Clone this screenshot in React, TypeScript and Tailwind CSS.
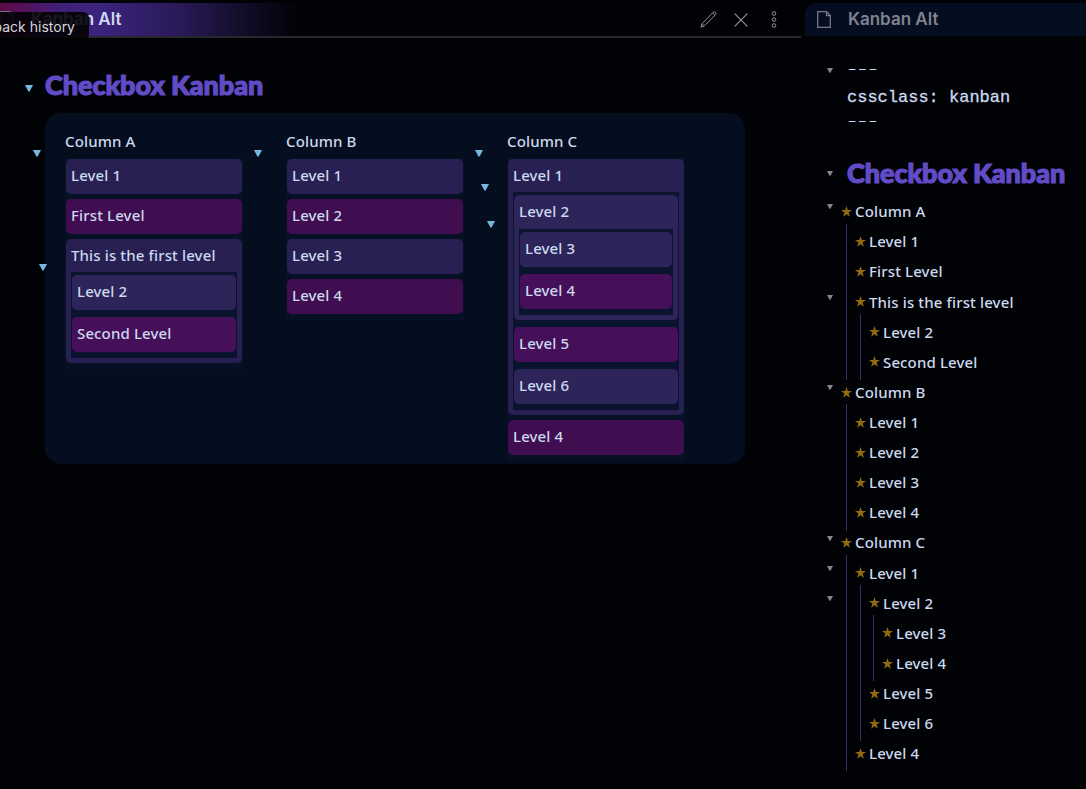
import React from "react";

type Item = { t: string; pink?: boolean; kids?: Item[] };

const columns: { title: string; items: Item[] }[] = [
  {
    title: "Column A",
    items: [
      { t: "Level 1" },
      { t: "First Level", pink: true },
      { t: "This is the first level", kids: [{ t: "Level 2" }, { t: "Second Level", pink: true }] },
    ],
  },
  {
    title: "Column B",
    items: [{ t: "Level 1" }, { t: "Level 2", pink: true }, { t: "Level 3" }, { t: "Level 4", pink: true }],
  },
  {
    title: "Column C",
    items: [
      {
        t: "Level 1",
        kids: [
          { t: "Level 2", kids: [{ t: "Level 3" }, { t: "Level 4", pink: true }] },
          { t: "Level 5", pink: true },
          { t: "Level 6" },
        ],
      },
      { t: "Level 4", pink: true },
    ],
  },
];

const outline: { t: string; d: number; fold?: boolean }[] = [
  { t: "Column A", d: 0, fold: true },
  { t: "Level 1", d: 1 },
  { t: "First Level", d: 1 },
  { t: "This is the first level", d: 1, fold: true },
  { t: "Level 2", d: 2 },
  { t: "Second Level", d: 2 },
  { t: "Column B", d: 0, fold: true },
  { t: "Level 1", d: 1 },
  { t: "Level 2", d: 1 },
  { t: "Level 3", d: 1 },
  { t: "Level 4", d: 1 },
  { t: "Column C", d: 0, fold: true },
  { t: "Level 1", d: 1, fold: true },
  { t: "Level 2", d: 2, fold: true },
  { t: "Level 3", d: 3 },
  { t: "Level 4", d: 3 },
  { t: "Level 5", d: 2 },
  { t: "Level 6", d: 2 },
  { t: "Level 4", d: 1 },
];

function Tri({ className }: { className: string }) {
  return (
    <svg viewBox="0 0 8 7" preserveAspectRatio="none" className={className}>
      <path d="M0 0H8L4.6 6.6H3.4Z" fill="currentColor" />
    </svg>
  );
}

function FileIcon({ className }: { className: string }) {
  return (
    <svg viewBox="0 0 14 17" fill="none" stroke="currentColor" strokeWidth="1.3" className={className}>
      <path d="M.7.7H9.5L13.3 4.6V16.3H.7Z" />
      <path d="M9.5 .7V4.6H13.3" />
    </svg>
  );
}

function Card({ item, depth }: { item: Item; depth: number }) {
  const color = item.pink
    ? depth ? "bg-[#460f5a]" : "bg-[#400d50]"
    : depth ? "bg-[#2d245a]" : "bg-[#282052]";
  if (!item.kids) {
    return <div className={`h-[35px] rounded-[5px] pl-[5px] leading-[32px] ${color}`}>{item.t}</div>;
  }
  return (
    <div className={`rounded-[5px] px-[5px] pb-[5px] ${color}`}>
      <div className={depth ? "h-[34px] leading-[32px]" : "h-[33px] leading-[32px]"}>{item.t}</div>
      <div className="flex flex-col gap-[7px] bg-[#0b142f] px-px pt-[3px] pb-[6px]">
        {item.kids.map((k) => (
          <Card key={k.t} item={k} depth={depth + 1} />
        ))}
      </div>
    </div>
  );
}

function Heading() {
  return (
    <h1 className="font-['Lato'] text-[27px] leading-[32px] font-black tracking-[-0.05px] whitespace-nowrap text-[#624bc6] [-webkit-text-stroke:1.2px_#624bc6]">
      Checkbox Kanban
    </h1>
  );
}

const blueMarks = [
  "left-[25px] top-[85px]",
  "left-[33px] top-[150px]",
  "left-[39px] top-[264px]",
  "left-[254px] top-[150px]",
  "left-[475px] top-[150px]",
  "left-[481px] top-[184px]",
  "left-[487px] top-[221px]",
];

const guides = ["left-[36px]", "left-[50px]", "left-[63px]"];
const indents = ["pl-[31px]", "pl-[45px]", "pl-[59px]", "pl-[72px]"];

export default function App() {
  return (
    <div className="relative flex h-[789px] w-[1086px] gap-[4px] overflow-hidden bg-[#010206] pt-[3px] font-['Noto_Sans',sans-serif] text-[15px] font-medium tracking-[0.13px] text-[#ccd9ee]">
      <main className="w-[801px] shrink-0">
        <header className="flex h-[35px] items-center border-b-2 border-[#29272e] bg-[linear-gradient(90deg,#5e0b45_0px,#560f58_20px,#3f2078_60px,#3b237d_100px,#291a57_180px,#130d2a_240px,#010206_298px)]">
          <FileIcon className="h-[17px] w-[14px] text-[#75708a]" />
          <span className="ml-[17px] flex-1 font-['Inter'] text-[17px] font-semibold tracking-normal text-[#d0d9f0]">Kanban Alt</span>
          <div className="flex items-center pr-[24px] text-[#93939c]">
            <svg viewBox="0 0 17 17" fill="none" stroke="currentColor" className="mr-[17px] size-[17px]">
              <path d="M.8 16.2 2 12.8 13.3 1.2 Q14.4 .3 15.5 1.3 Q16.6 2.5 15.7 3.6L4.1 15Z M12.6 2 15 4.4 M2 12.8 4.1 15" />
            </svg>
            <svg viewBox="0 0 14 14" stroke="currentColor" className="mr-[23px] size-[14px]">
              <path d="M.7.7 13.3 13.3M13.3.7.7 13.3" strokeWidth="1.2" />
            </svg>
            <svg viewBox="0 0 6 17" fill="none" stroke="currentColor" className="h-[17px] w-[6px]">
              <circle cx="3" cy="2.5" r="1.8" />
              <circle cx="3" cy="8.5" r="1.8" />
              <circle cx="3" cy="14.5" r="1.8" />
            </svg>
          </div>
        </header>
        <section className="pt-[31px] pl-[45px]">
          <Heading />
          <div className="mt-[12px] flex h-[351px] w-[700px] items-start gap-[43px] rounded-[16px] bg-[#050e1f] pt-[14px] pl-[20px]">
            {columns.map((c) => (
              <div key={c.title} className="w-[178px]">
                <div className="h-[31px] leading-[29px]">{c.title}</div>
                <div className="flex flex-col gap-[5px] bg-[#061126] px-px pt-px pb-[6px]">
                  {c.items.map((i) => (
                    <Card key={i.t} item={i} depth={0} />
                  ))}
                </div>
              </div>
            ))}
          </div>
        </section>
      </main>

      <aside className="flex-1">
        <header className="flex h-[33px] items-center rounded-tl-[12px] bg-[#050e20] pl-[12px] text-[#777887]">
          <FileIcon className="h-[17px] w-[14px]" />
          <span className="ml-[17px] font-['Inter'] text-[17px] font-semibold tracking-normal text-[#81828f]">Kanban Alt</span>
        </header>
        <div className="pt-[21px] pl-[22px]">
          <div className="flex items-center gap-[14px]">
            <Tri className="h-[5px] w-[6px] text-[#85858d]" />
            <span className="h-[26px] font-['Inter'] text-[23px] leading-[24px] font-extralight tracking-[0.1px]">---</span>
          </div>
          <div className="h-[28px] pl-[20px] font-['Liberation_Mono',monospace] text-[17px] leading-[30px] tracking-normal [-webkit-text-stroke:0.3px_#ccd9ee]">
            cssclass: kanban
          </div>
          <div className="h-[26px] pl-[20px] font-['Inter'] text-[23px] leading-[20px] font-extralight tracking-[0.1px]">---</div>
          <div className="mt-[20px] flex items-center gap-[14px]">
            <Tri className="h-[5px] w-[6px] text-[#85858d]" />
            <Heading />
          </div>
        </div>
        <ul className="mt-[7.4px]">
          {outline.map((o, i) => {
            const next = outline[i + 1]?.d ?? 0;
            return (
              <li key={i} className={`relative flex h-[30.11px] items-center ${indents[o.d]}`}>
                {o.fold && <Tri className="absolute top-[8px] left-[22px] h-[5px] w-[6px] text-[#85858d]" />}
                {guides.slice(0, o.d).map((g, n) => (
                  <span
                    key={g}
                    className={`absolute top-0 w-px translate-x-[5px] translate-y-[-3px] bg-[#3d2e69] ${g} ${n >= next ? "bottom-[-6px]" : "bottom-0"}`}
                  />
                ))}
                <svg viewBox="0 0 10 10" className="mr-[3px] ml-[5px] size-[11px] shrink-0 text-[#926b10]">
                  <path d="M5 0 6.2 3.7H10L6.9 6 8.1 9.8 5 7.5 1.9 9.8 3.1 6 0 3.7H3.8Z" fill="currentColor" />
                </svg>
                <span className="whitespace-nowrap">{o.t}</span>
              </li>
            );
          })}
        </ul>
      </aside>

      {blueMarks.map((p) => (
        <Tri key={p} className={`absolute h-[7px] w-[8px] text-[#74b9dd] ${p}`} />
      ))}
      <div className="absolute top-[12px] left-0 flex h-[29px] w-[89px] justify-end overflow-hidden rounded-r-[6px] bg-[#020205]/90 pr-[14px] font-['Inter'] text-[14px] leading-[30px] font-normal tracking-normal whitespace-nowrap text-[#d5d5d8]">
        back history
      </div>
    </div>
  );
}
